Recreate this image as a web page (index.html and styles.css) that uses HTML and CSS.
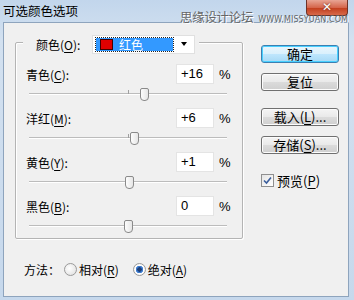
FILE: index.html
```html
<!DOCTYPE html>
<html lang="zh">
<head>
    <meta charset="UTF-8">
    <title>可选颜色选项</title>
    <link rel="stylesheet" href="styles.css">
</head>
<body>
<div class="window">
    <div class="titlebar">
        <span class="title">可选颜色选项</span>
        <div class="close">✕</div>
        <div class="watermark"><span class="wm-cn">思缘设计论坛</span><span class="wm-en">WWW.MISSYUAN.COM</span></div>
    </div>
    <div class="client">
        <div class="left">
            <div class="group">
                <div class="legend">
                    <span class="legend-label">颜色(<u>O</u>):</span>
                    <div class="select">
                        <div class="select-value"><span class="swatch"></span>红色</div>
                        <span class="arrow"></span>
                    </div>
                </div>

                <div class="adj">
                    <div class="adj-head">
                        <span class="adj-label">青色(<u>C</u>):</span>
                        <span class="field">+16</span>
                        <span class="pct">%</span>
                    </div>
                    <div class="slider">
                        <span class="track"></span><span class="tick"></span>
                        <span class="thumb" style="left: 111px"></span>
                    </div>
                </div>

                <div class="adj">
                    <div class="adj-head">
                        <span class="adj-label">洋红(<u>M</u>):</span>
                        <span class="field">+6</span>
                        <span class="pct">%</span>
                    </div>
                    <div class="slider">
                        <span class="track"></span><span class="tick"></span>
                        <span class="thumb" style="left: 101px"></span>
                    </div>
                </div>

                <div class="adj">
                    <div class="adj-head">
                        <span class="adj-label">黄色(<u>Y</u>):</span>
                        <span class="field">+1</span>
                        <span class="pct">%</span>
                    </div>
                    <div class="slider">
                        <span class="track"></span><span class="tick"></span>
                        <span class="thumb" style="left: 96px"></span>
                    </div>
                </div>

                <div class="adj">
                    <div class="adj-head">
                        <span class="adj-label">黑色(<u>B</u>):</span>
                        <span class="field">0</span>
                        <span class="pct">%</span>
                    </div>
                    <div class="slider">
                        <span class="track"></span><span class="tick"></span>
                        <span class="thumb" style="left: 95px"></span>
                    </div>
                </div>
            </div>

            <div class="method">
                <span class="method-label">方法：</span>
                <span class="radio"></span><span class="radio-text">相对(<u>R</u>)</span>
                <span class="radio checked"></span><span class="radio-text">绝对(<u>A</u>)</span>
            </div>
        </div>

        <div class="right">
            <div class="btn default">确定</div>
            <div class="btn">复位</div>
            <div class="btn spaced">载入(<u>L</u>)...</div>
            <div class="btn">存储(<u>S</u>)...</div>
            <div class="check-row">
                <span class="checkbox">
                    <svg width="9" height="9" viewBox="0 0 9 9"><path d="M1 4.5 L3.5 7 L8 1.5" fill="none" stroke="#3a5d9c" stroke-width="1.6"/></svg>
                </span>
                <span>预览(<u>P</u>)</span>
            </div>
        </div>
    </div>
</div>
</body>
</html>
```

FILE: styles.css
```css
body {
    margin: 0;
    font-family: "Noto Sans CJK SC", "Liberation Sans", sans-serif;
    font-size: 12px;
    color: #000;
}

u {
    text-decoration: underline;
    text-underline-offset: 2px;
}

.window {
    width: 354px;
    height: 300px;
    background: linear-gradient(#c2d6ec, #d3e1f0 40px, #c6d8ec);
    overflow: hidden;
}

.titlebar {
    height: 22px;
    display: flex;
    align-items: flex-start;
    position: relative;
}

.title {
    margin: 3px 0 0 3px;
    font-size: 12.5px;
    line-height: 16px;
}

.close {
    margin: 0 6px 0 auto;
    width: 42px;
    height: 16px;
    box-sizing: border-box;
    border: 1px solid #6e3227;
    border-top: none;
    border-radius: 0 0 4px 4px;
    background: linear-gradient(#e8a594, #d5664c 50%, #c3401f 55%, #d7694a);
    color: #fff;
    font-family: "DejaVu Sans", sans-serif;
    font-weight: bold;
    font-size: 12px;
    line-height: 15px;
    text-align: center;
    text-shadow: 0 0 2px #5a1a10;
}

.watermark {
    position: absolute;
    left: 180px;
    top: 10px;
    display: flex;
    align-items: baseline;
    white-space: nowrap;
    color: #666;
    text-shadow: 1px 1px 0 #fff;
    z-index: 2;
}

.wm-cn {
    font-size: 12.5px;
    line-height: 14px;
    letter-spacing: -0.3px;
}

.wm-en {
    margin-left: 5px;
    font-family: "DejaVu Sans", sans-serif;
    font-size: 8px;
    letter-spacing: 0.1px;
}

.client {
    margin: 0 5px 0 3px;
    height: 275px;
    box-sizing: border-box;
    border: 1px solid #8ea4bd;
    background: #f0f0f0;
    display: flex;
}

.left {
    padding: 19px 0 0 11px;
    width: 228px;
}

.group {
    height: 197px;
    box-sizing: border-box;
    border: 1px solid #b4b4b4;
    box-shadow: inset 1px 1px 0 #fff, 1px 1px 0 #fff;
    border-radius: 2px;
}

.legend {
    margin: -9px 0 0 7px;
    padding: 0 4px 0 13px;
    width: 159px;
    height: 20px;
    background: #f0f0f0;
    display: flex;
    align-items: center;
}

.legend-label {
    width: 56px;
}

.select {
    width: 103px;
    height: 19px;
    box-sizing: border-box;
    border: 1px solid #e0e0e0;
    background: #fff;
    display: flex;
    align-items: center;
    padding-left: 3px;
}

.select-value {
    width: 77px;
    height: 13px;
    box-sizing: border-box;
    background: #3399ff;
    outline: 1px dotted #222;
    color: #fff;
    display: flex;
    align-items: center;
    line-height: 13px;
}

.swatch {
    width: 13px;
    height: 11px;
    margin: 0 6px 0 4px;
    box-sizing: border-box;
    border: 1px solid #400;
    background: #e00000;
}

.arrow {
    margin-left: 8px;
    border-left: 3.5px solid transparent;
    border-right: 3.5px solid transparent;
    border-top: 4px solid #000;
}

.adj {
    padding: 10px 0 0 10px;
}

.adj + .adj {
    padding-top: 8px;
}

.adj-head {
    display: flex;
    align-items: center;
    height: 20px;
}

.adj-label {
    flex: 1;
}

.field {
    width: 38px;
    height: 20px;
    box-sizing: border-box;
    border: 1px solid #e4e4e4;
    background: #fff;
    padding-left: 4px;
    line-height: 18px;
    font-family: "Liberation Sans", sans-serif;
    font-size: 13px;
}

.pct {
    width: 11px;
    margin: 0 12px 0 5px;
    font-family: "Liberation Sans", sans-serif;
    font-size: 13px;
}

.slider {
    position: relative;
    margin: 4px 0 0 3px;
    width: 198px;
    height: 12px;
}

.track {
    position: absolute;
    left: 0;
    right: 0;
    top: 5px;
    height: 1px;
    background: #bcbcbc;
    border-bottom: 1px solid #fff;
}

.tick {
    position: absolute;
    left: 99px;
    top: 2px;
    width: 1px;
    height: 4px;
    background: #a0a0a0;
}

.thumb {
    position: absolute;
    top: 0;
    width: 7px;
    height: 11px;
    border: 1px solid #8a8a8a;
    border-radius: 2px 2px 4px 4px;
    background: linear-gradient(90deg, #fdfdfd, #e6e6e6);
}

.method {
    margin: 22px 0 0 9px;
    display: flex;
    align-items: center;
    height: 16px;
}

.method-label {
    width: 40px;
}

.radio {
    width: 11px;
    height: 11px;
    border-radius: 50%;
    border: 1px solid #9a9a9a;
    background: radial-gradient(circle at 40% 40%, #fff, #dcdcdc);
    margin-right: 2px;
    box-sizing: content-box;
}

.radio.checked {
    background: radial-gradient(circle, #1e3f77 0 2px, #3b7bd0 2.5px 3.5px, #fff 4px, #e6e6e6);
}

.radio-text {
    margin-right: 14px;
}

.right {
    margin-left: 18px;
    padding-top: 22px;
    display: flex;
    flex-direction: column;
    align-items: flex-start;
}

.btn {
    width: 78px;
    height: 18px;
    box-sizing: border-box;
    border: 1px solid #707070;
    border-radius: 3px;
    background: linear-gradient(#f4f4f4, #e9e9e9 50%, #dbdbdb 52%, #cfcfcf);
    box-shadow: inset 0 0 0 1px #fcfcfc;
    text-align: center;
    line-height: 16px;
    margin-bottom: 10px;
    font-size: 13px;
}

.btn.default {
    border-color: #3c7fb1;
    background: linear-gradient(#eaf6fd, #d9f0fc 50%, #bee6fd 52%, #a7d9f5);
    box-shadow: inset 0 0 0 1px #48d0ff;
}

.btn.spaced {
    margin-top: 7px;
}

.check-row {
    margin-top: 7px;
    display: flex;
    align-items: center;
    font-size: 13px;
}

.checkbox {
    width: 11px;
    height: 11px;
    border: 1px solid #8f8f8f;
    background: linear-gradient(135deg, #e4e4e4, #fff);
    margin-right: 3px;
    display: flex;
    align-items: center;
    justify-content: center;
}
```
